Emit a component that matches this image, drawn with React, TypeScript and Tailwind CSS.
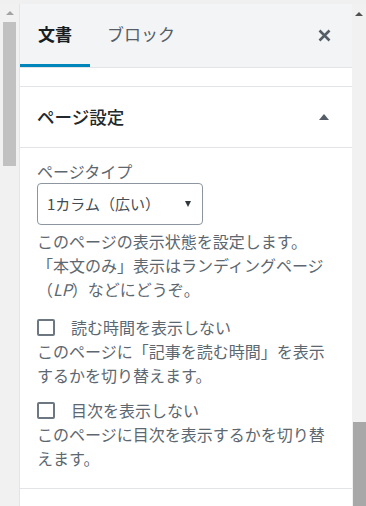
import React, { useState } from "react";

const jp = { fontFamily: '"Noto Sans CJK JP", "Noto Sans", sans-serif' };

const Checkbox = ({ label, desc }: { label: string; desc: string[] }) => {
	const [on, setOn] = useState(false);
	return (
		<div>
			<label className="flex items-center gap-[16px] h-[24px] cursor-pointer" onClick={() => setOn(!on)}>
				<span className="w-[18px] h-[17px] border-2 border-[#6c7781] rounded-[2px] bg-white" />
				<span>{label}</span>
			</label>
			{desc.map((d) => (
				<p key={d}>{d}</p>
			))}
		</div>
	);
};

const App = () => {
	const [tab, setTab] = useState("doc");

	return (
		<div className="w-[366px] h-[506px] overflow-hidden bg-[#f1f1f1] flex flex-col" style={jp}>
			<div className="h-[4px] bg-[#f0f0f0]" />
			<div className="flex flex-1 min-h-0">
				{/* left scrollbar */}
				<div className="w-[19px] flex flex-col items-center">
					<div className="h-[18px] flex items-center justify-center">
						<span className="w-0 h-0 border-l-[4px] border-r-[4px] border-b-[4px] border-l-transparent border-r-transparent border-b-[#a3a3a3]" />
					</div>
					<div className="w-[13px] h-[144px] bg-[#c1c1c1]" />
				</div>

				{/* panel */}
				<div className="w-[333px] bg-white border-l border-[#e2e4e7] flex flex-col text-[#191e23]">
					<div className="h-[64px] bg-[#f3f4f5] border-b border-[#e2e4e7] flex items-stretch">
						<button
							className={`w-[70px] flex items-center justify-center text-[17px] border-b-[3px] ${tab === "doc" ? "font-bold border-[#0085ba]" : "border-transparent"}`}
							onClick={() => setTab("doc")}
						>
							文書
						</button>
						<button
							className={`ml-[1px] px-[16px] flex items-center text-[17px] text-[#555d66] border-b-[3px] ${tab === "block" ? "font-bold border-[#0085ba]" : "border-transparent"}`}
							onClick={() => setTab("block")}
						>
							ブロック
						</button>
						<div className="flex-1" />
						<button className="w-[56px] flex items-center justify-center text-[#555d66]">
							<svg width="13" height="13" viewBox="0 0 13 13">
								<path d="M1.5 1.5l10 10M11.5 1.5l-10 10" stroke="currentColor" strokeWidth="2.6" />
							</svg>
						</button>
					</div>

					<div className="h-[19px] border-b border-[#e2e4e7]" />

					<div className="h-[61px] border-b border-[#e2e4e7] flex items-center justify-between pl-[17px] pr-[23px]">
						<span className="text-[17.5px] font-medium text-[#23282d]">ページ設定</span>
						<span className="w-0 h-0 border-l-[5px] border-r-[5px] border-b-[6px] border-l-transparent border-r-transparent border-b-[#555d66]" />
					</div>

					<div className="pl-[17px] pr-[14px] pt-[11px] pb-[18px] border-b border-[#e2e4e7] text-[16px] leading-[24px] text-[#5d6770]">
						<p>ページタイプ</p>
						<div className="w-[166px] h-[42px] border border-[#8d96a0] rounded-[4px] flex items-center justify-between pl-[9px] pr-[11px] text-[15px] text-[#444b52]">
							<span>1カラム（広い）</span>
							<span className="w-0 h-0 border-l-[3.5px] border-r-[3.5px] border-t-[6px] border-l-transparent border-r-transparent border-t-[#32373c]" />
						</div>
						<div className="mt-[4px]">
							<p>このページの表示状態を設定します。</p>
							<p>「本文のみ」表示はランディングページ</p>
							<p>
								（<i>LP</i>）などにどうぞ。
							</p>
						</div>
						<div className="mt-[14px] flex flex-col gap-[11px]">
							<Checkbox label="読む時間を表示しない" desc={["このページに「記事を読む時間」を表示", "するかを切り替えます。"]} />
							<Checkbox label="目次を表示しない" desc={["このページに目次を表示するかを切り替", "えます。"]} />
						</div>
					</div>
					<div className="flex-1" />
				</div>

				{/* right scrollbar */}
				<div className="w-[14px] flex flex-col items-center">
					<div className="h-[20px] flex items-center justify-center">
						<span className="w-0 h-0 border-l-[4px] border-r-[4px] border-b-[4px] border-l-transparent border-r-transparent border-b-[#505050]" />
					</div>
					<div className="flex-1" />
					<div className="w-[13px] h-[84px] bg-[#a8a8a8]" />
				</div>
			</div>
		</div>
	);
};

export default App;
